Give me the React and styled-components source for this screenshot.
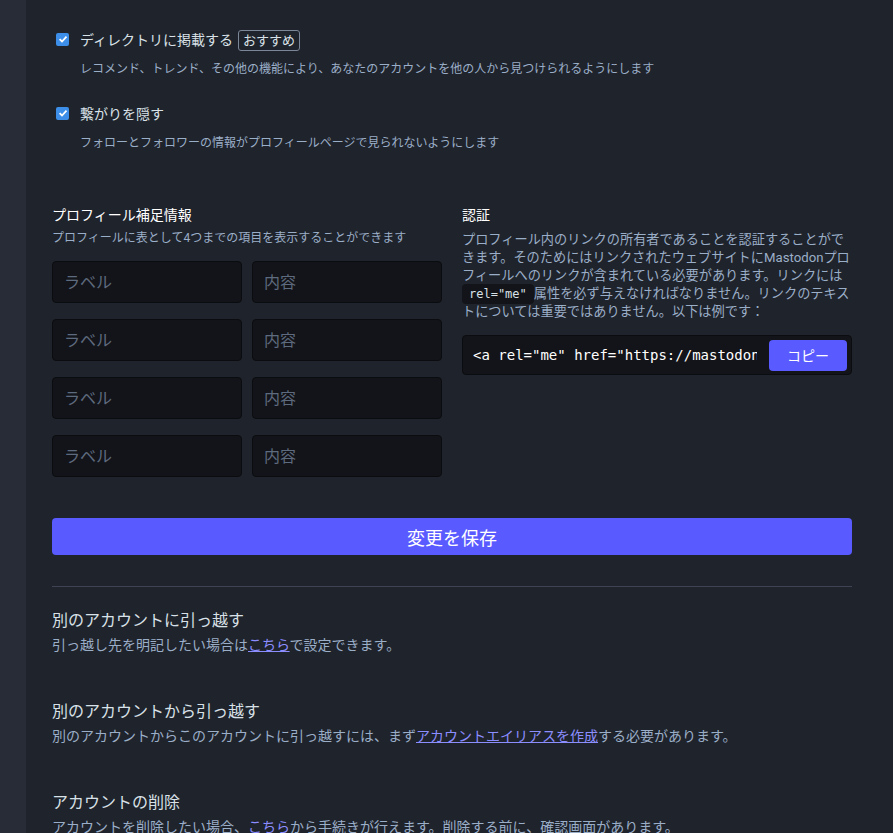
import styled, { createGlobalStyle } from 'styled-components';

const GlobalStyle = createGlobalStyle`
  html, body {
    margin: 0;
    padding: 0;
    background: #1f232b;
  }
  body {
    font-family: Roboto, "Noto Sans CJK JP", sans-serif;
    color: #d9e1e8;
  }
`;

const Page = styled.div`
  display: flex;
  min-height: 833px;
`;

const Sidebar = styled.div`
  width: 26px;
  flex-shrink: 0;
  background: #282c37;
`;

const Main = styled.main`
  flex: 1;
  background: #1f232b;
  padding: 30px 41px 0 26px;
  overflow: hidden;
`;

const Content = styled.div`
  width: 800px;
`;

const CheckGroup = styled.div`
  margin-bottom: 26px;
`;

const CheckRow = styled.label`
  display: flex;
  align-items: center;
  gap: 11px;
  padding-left: 4px;
  font-size: 14px;
  line-height: 21px;
  color: #d9e1e8;
`;

const LabelText = styled.span`
  display: flex;
  align-items: center;
  gap: 5px;
`;

const Box = styled.span`
  width: 13px;
  height: 13px;
  margin-top: -3px;
  border-radius: 2px;
  background: #3c8ee8;
  display: flex;
  align-items: center;
  justify-content: center;
  flex-shrink: 0;
`;

const Badge = styled.span`
  display: inline-block;
  padding: 0 4px;
  border: 1px solid #7c8698;
  border-radius: 3px;
  font-size: 13px;
  line-height: 19px;
  color: #d9e1e8;
`;

const Hint = styled.p`
  margin: ${(p) => p.$top ?? 9}px 0 0 ${(p) => p.$indent || 0}px;
  font-size: ${(p) => p.$size || 12}px;
  line-height: ${(p) => p.$lh || 18}px;
  color: #9baec8;
`;

const Columns = styled.div`
  display: grid;
  grid-template-columns: 390px 390px;
  gap: 20px;
  margin-top: 53px;
`;

const ColTitle = styled.h4`
  margin: 0;
  font-size: 14px;
  font-weight: 400;
  line-height: 20px;
  color: #ffffff;
`;

const FieldGrid = styled.div`
  display: grid;
  grid-template-columns: 190px 190px;
  column-gap: 10px;
  row-gap: 16px;
  margin-top: 14px;
`;

const Input = styled.input`
  box-sizing: border-box;
  width: 190px;
  height: 42px;
  background: #131419;
  border: 1px solid #0b0c0f;
  border-radius: 4px;
  padding: 0 11px;
  font-family: Roboto, "Noto Sans CJK JP", sans-serif;
  font-size: 16px;
  color: #d9e1e8;
  outline: none;

  &::placeholder {
    color: #5e6a7e;
  }
`;

const Lead = styled.p`
  margin: 6px -4px 0 0;
  font-size: 13.2px;
  line-height: 18px;
  color: #9baec8;
`;

const Code = styled.code`
  font-family: "DejaVu Sans Mono", monospace;
  font-size: 12px;
  background: #131419;
  color: #d9e1e8;
  padding: 3px 7px;
  border-radius: 4px;
`;

const CopyBox = styled.div`
  display: flex;
  align-items: center;
  gap: 12px;
  margin-top: 14px;
  height: 40px;
  box-sizing: border-box;
  background: #131419;
  border: 1px solid #0b0c0f;
  border-radius: 4px;
  padding: 0 4px 0 10px;
`;

const CopyText = styled.div`
  flex: 1;
  overflow: hidden;
  white-space: nowrap;
  font-family: "DejaVu Sans Mono", monospace;
  font-size: 14px;
  color: #ffffff;
`;

const CopyButton = styled.button`
  flex-shrink: 0;
  width: 78px;
  height: 31px;
  border: none;
  border-radius: 4px;
  background: #595aff;
  color: #ffffff;
  font-family: Roboto, "Noto Sans CJK JP", sans-serif;
  font-size: 14px;
`;

const SaveButton = styled.button`
  display: block;
  width: 100%;
  height: 37px;
  margin-top: 41px;
  border: none;
  border-radius: 4px;
  background: #595aff;
  color: #ffffff;
  font-family: Roboto, "Noto Sans CJK JP", sans-serif;
  font-size: 18px;
`;

const Divider = styled.hr`
  margin: 31px 0 0;
  border: 0;
  border-top: 1px solid #3d4353;
`;

const Section = styled.section`
  margin-top: ${(p) => p.$top}px;
`;

const SectionTitle = styled.h3`
  margin: 0;
  font-size: 16px;
  font-weight: 400;
  line-height: 22px;
  color: #d9e1e8;
`;

const Link = styled.a`
  color: #8c8dff;
  text-decoration: underline;
`;

const Check = () => (
  <Box>
    <svg width="10" height="10" viewBox="0 0 10 10">
      <path d="M1.6 5.2 L4 7.5 L8.5 2.6" fill="none" stroke="#fff" strokeWidth="1.8" />
    </svg>
  </Box>
);

const fields = [0, 1, 2, 3];

export default function App() {
  return (
    <>
      <GlobalStyle />
      <Page>
        <Sidebar />
        <Main>
          <Content>
            <CheckGroup>
              <CheckRow>
                <Check />
                <LabelText>
                  ディレクトリに掲載する
                  <Badge>おすすめ</Badge>
                </LabelText>
              </CheckRow>
              <Hint $indent={28}>
                レコメンド、トレンド、その他の機能により、あなたのアカウントを他の人から見つけられるようにします
              </Hint>
            </CheckGroup>
            <CheckGroup>
              <CheckRow>
                <Check />
                <LabelText>繋がりを隠す</LabelText>
              </CheckRow>
              <Hint $indent={28}>
                フォローとフォロワーの情報がプロフィールページで見られないようにします
              </Hint>
            </CheckGroup>

            <Columns>
              <div>
                <ColTitle>プロフィール補足情報</ColTitle>
                <Hint $top={4}>プロフィールに表として4つまでの項目を表示することができます</Hint>
                <FieldGrid>
                  {fields.map((i) => [
                    <Input key={`l${i}`} placeholder="ラベル" />,
                    <Input key={`v${i}`} placeholder="内容" />,
                  ])}
                </FieldGrid>
              </div>
              <div>
                <ColTitle>認証</ColTitle>
                <Lead>
                  プロフィール内のリンクの所有者であることを認証することができます。そのためにはリンクされたウェブサイトにMastodonプロフィールへのリンクが含まれている必要があります。リンクには
                  <Code>rel="me"</Code>
                  属性を必ず与えなければなりません。リンクのテキストについては重要ではありません。以下は例です：
                </Lead>
                <CopyBox>
                  <CopyText>{'<a rel="me" href="https://mastodon.social/@user">Mastodon</a>'}</CopyText>
                  <CopyButton>コピー</CopyButton>
                </CopyBox>
              </div>
            </Columns>

            <SaveButton>変更を保存</SaveButton>
            <Divider />

            <Section $top={23}>
              <SectionTitle>別のアカウントに引っ越す</SectionTitle>
              <Hint $size={14} $lh={20} $top={3}>
                引っ越し先を明記したい場合は<Link>こちら</Link>で設定できます。
              </Hint>
            </Section>
            <Section $top={46}>
              <SectionTitle>別のアカウントから引っ越す</SectionTitle>
              <Hint $size={14} $lh={20} $top={3}>
                別のアカウントからこのアカウントに引っ越すには、まず<Link>アカウントエイリアスを作成</Link>する必要があります。
              </Hint>
            </Section>
            <Section $top={46}>
              <SectionTitle>アカウントの削除</SectionTitle>
              <Hint $size={14} $lh={20} $top={3}>
                アカウントを削除したい場合、<Link>こちら</Link>から手続きが行えます。削除する前に、確認画面があります。
              </Hint>
            </Section>
          </Content>
        </Main>
      </Page>
    </>
  );
}
